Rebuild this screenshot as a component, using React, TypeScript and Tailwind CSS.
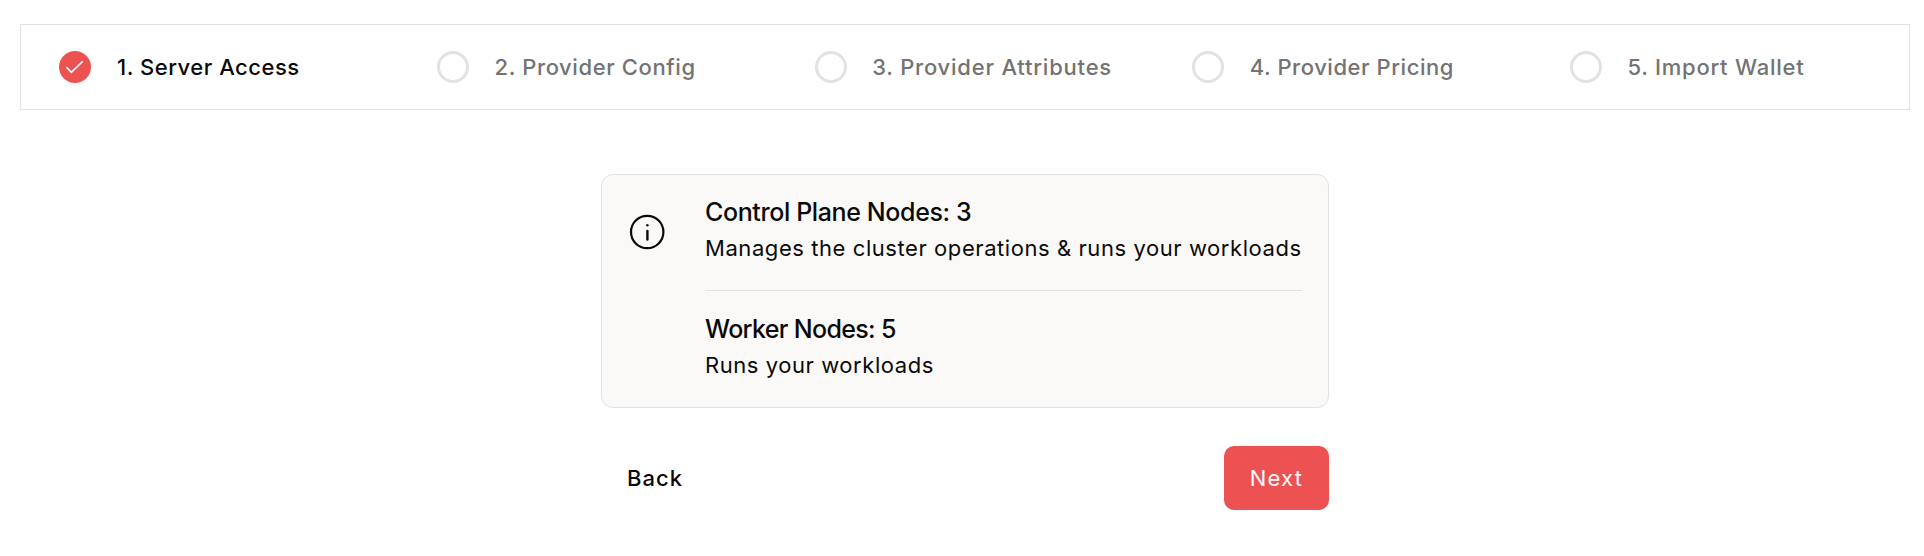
type Step = { label: string; spacing: string; done?: boolean };

const steps: Step[] = [
  { label: "1. Server Access", spacing: "tracking-[0.52px]", done: true },
  { label: "2. Provider Config", spacing: "tracking-[0.6px]" },
  { label: "3. Provider Attributes", spacing: "tracking-[0.79px]" },
  { label: "4. Provider Pricing", spacing: "tracking-[0.55px]" },
  { label: "5. Import Wallet", spacing: "tracking-[0.76px]" },
];

function StepMarker({ done }: { done?: boolean }) {
  if (!done) {
    return <span className="size-8 shrink-0 rounded-full border-3 border-[#e2e2e2]" />;
  }
  return (
    <span className="flex size-8 shrink-0 items-center justify-center rounded-full bg-[#ec5252]">
      <svg viewBox="0 0 32 32" className="size-8" fill="none" stroke="#fff" strokeWidth="1.6">
        <path d="M7.4 16.1 12.4 21.3 23.8 10.2" />
      </svg>
    </span>
  );
}

function Stepper() {
  return (
    <ol className="grid h-[86px] grid-cols-5 items-center border border-[#e2e2e2]">
      {steps.map((s) => (
        <li key={s.label} className="flex items-center gap-[25.6px] pl-[38.4px]">
          <StepMarker done={s.done} />
          <span
            className={`whitespace-nowrap text-[22px] leading-8 font-medium ${s.spacing} ${s.done ? "text-[#0a0a0a]" : "text-[#737373]"}`}
          >
            {s.label}
          </span>
        </li>
      ))}
    </ol>
  );
}

function InfoIcon() {
  return (
    <svg viewBox="0 0 36 36" className="mt-[39px] size-9 shrink-0" fill="none" stroke="#0a0a0a" strokeWidth="2.2">
      <circle cx="18.2" cy="18" r="16.2" />
      <path d="M18.4 17v8.6" strokeWidth="2.4" strokeLinecap="round" />
      <circle cx="18.4" cy="11.2" r="1.2" fill="#0a0a0a" stroke="none" />
    </svg>
  );
}

export default function App() {
  return (
    <main className="h-[556px] bg-white pt-6 pr-[14px] pl-5 font-['Inter',sans-serif] text-[#0a0a0a]">
      <Stepper />
      <div className="mx-auto mt-16 w-[728px]">
        <section className="flex h-[234px] rounded-xl border border-[#e2e2e2] bg-[#faf9f7] pl-[27px]">
          <InfoIcon />
          <div className="ml-10 w-[597px] pt-[17px] whitespace-nowrap">
            <h2 className="text-[25px] leading-10 font-medium tracking-[-0.38px]">Control Plane Nodes: 3</h2>
            <p className="text-[22px] leading-8 tracking-[0.57px]">
              Manages the cluster operations &amp; runs your workloads
            </p>
            <hr className="mt-[26px] mb-[18px] border-[#e2e2e2]" />
            <h2 className="text-[25px] leading-10 font-medium tracking-[-0.67px]">Worker Nodes: 5</h2>
            <p className="text-[22px] leading-8 tracking-[0.56px]">Runs your workloads</p>
          </div>
        </section>
        <div className="mt-[38px] flex h-16 justify-between">
          <button className="px-[26px] text-[22px] leading-8 font-medium tracking-[1px]">Back</button>
          <button className="w-[105px] rounded-[10px] bg-[#ec5252] text-[22px] leading-8 tracking-[1.2px] text-[#fafafa]">
            Next
          </button>
        </div>
      </div>
    </main>
  );
}
